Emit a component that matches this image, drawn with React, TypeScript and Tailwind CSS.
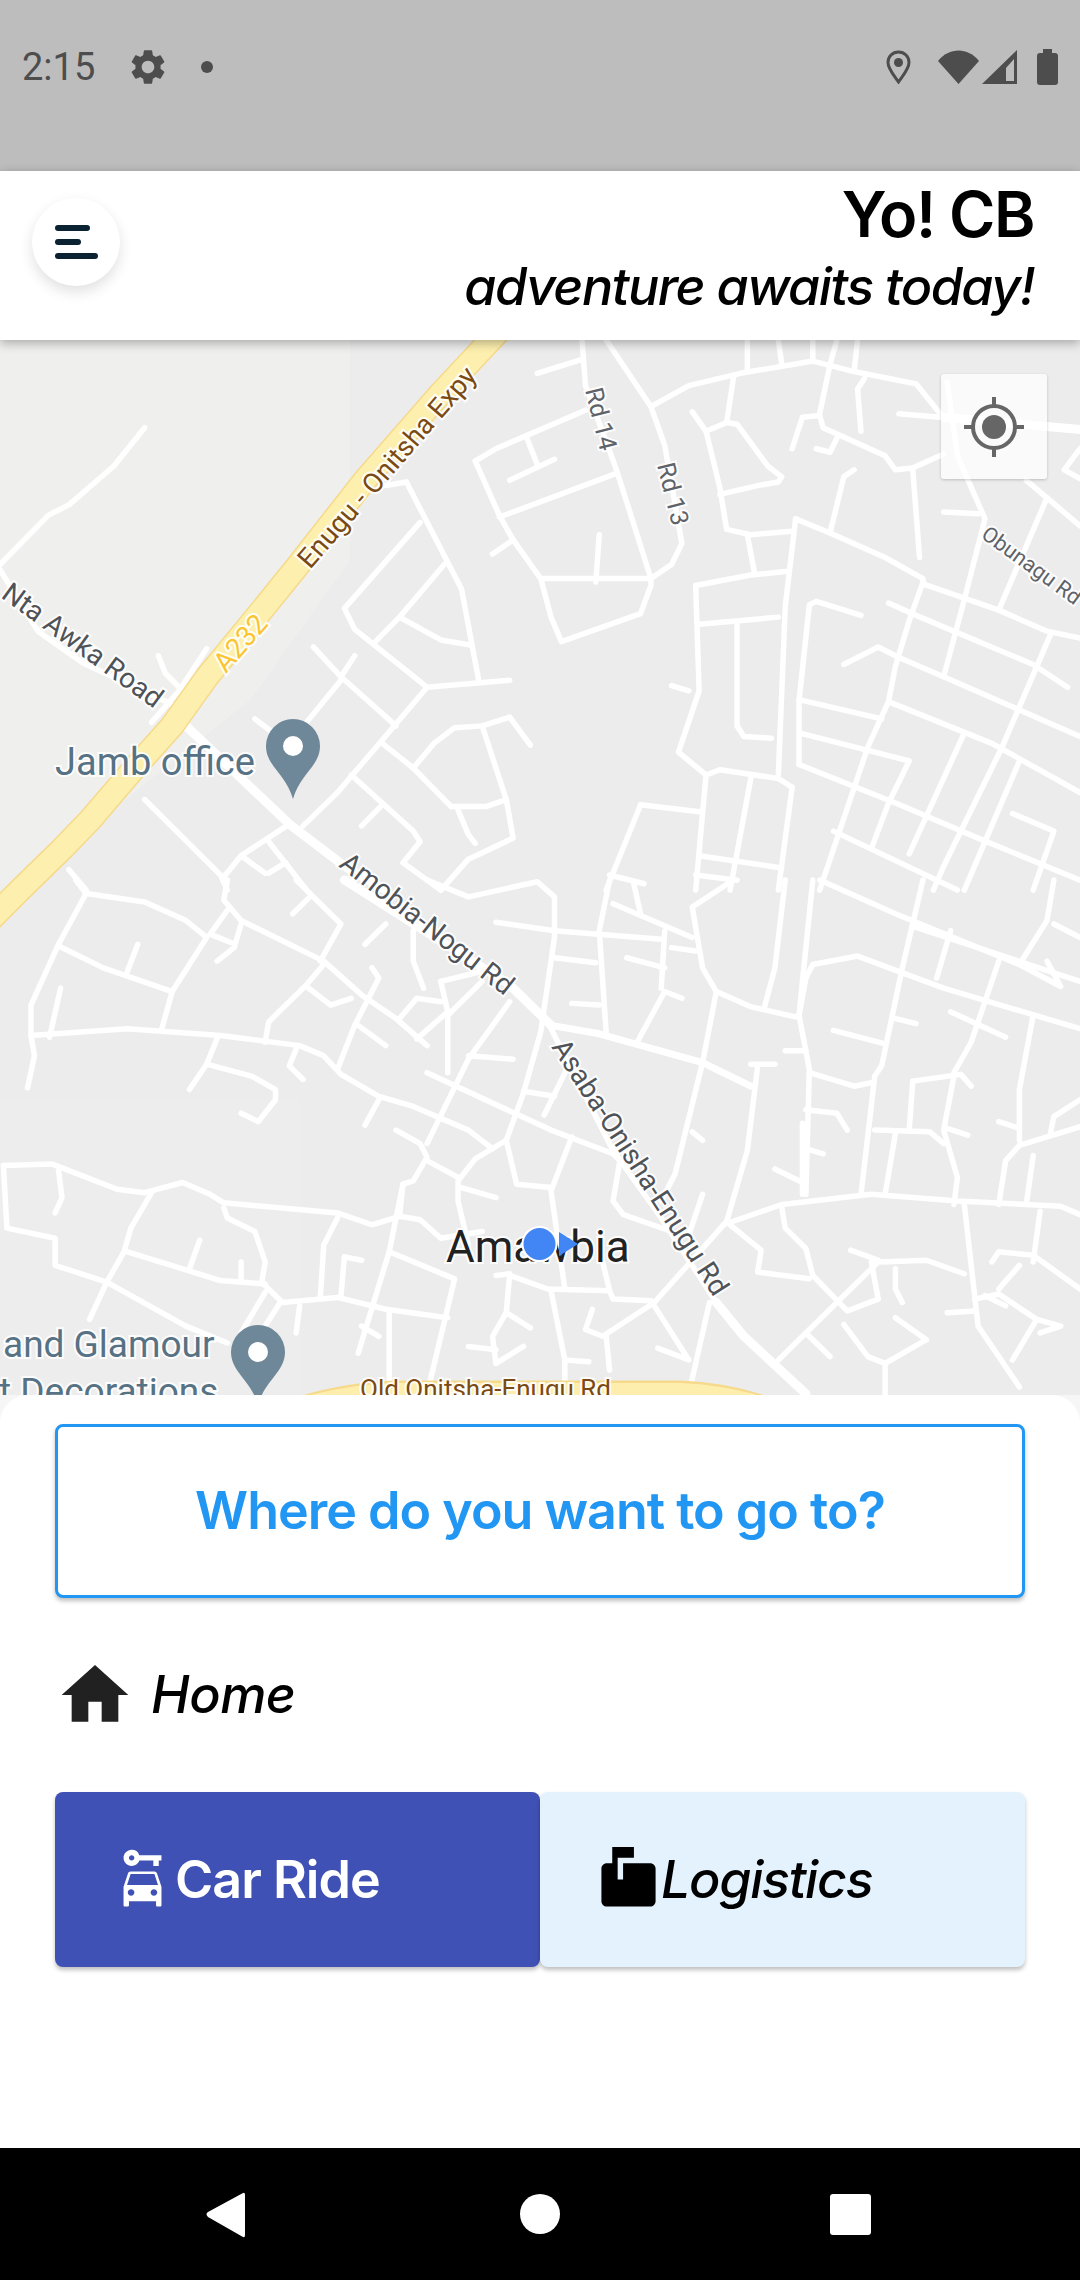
import React from "react";
import { MdCarRental, MdMarkunreadMailbox, MdHome, MdSettings } from "react-icons/md";

const upperRoads = [
  "M210,250 L165,360 L100,470 L70,500 L0,640",
  "M0,655 L55,830 L120,920 L240,1030 L270,1060",
  "M230,900 L240,950 L265,1000",
  "M300,880 L260,1000 L220,1090",
  "M590,405 L560,415",
  "M590,405 L670,710 L695,970",
  "M740,970 L620,990 L595,950 L515,825 L500,765 L610,520",
  "M645,640 L580,790 L545,860",
  "M580,790 L640,855 L685,870",
  "M455,875 L495,960 L515,900",
  "M495,960 L575,1100",
  "M620,990 L555,1140 L490,1290 L440,1385",
  "M495,970 L445,1090",
  "M370,1080 L430,1170",
  "M770,1155 L740,1075 L700,1100 L660,1105 L630,1150 L600,1220 L655,1330",
  "M555,1150 L600,1220",
  "M700,1100 L735,1310 L745,1420 L680,1480 L640,1568",
  "M655,1330 L705,1330 L735,1310",
  "M665,1340 L680,1410 L690,1435",
  "M510,1240 L600,1400 L610,1430 L585,1490 L640,1568",
  "M555,1325 L525,1385",
  "M210,1310 L320,1525 L330,1568",
  "M420,1380 L350,1470 L325,1530",
  "M390,1430 L445,1568",
  "M350,1470 L385,1520",
  "M415,1490 L390,1520",
  "M100,1510 L125,1568",
  "M690,345 L725,500 L745,570 L785,680 L800,790 L815,860 L930,780 L945,700 L945,680 L785,680",
  "M690,345 L720,310 L850,200",
  "M765,280 L780,355",
  "M740,400 L805,340",
  "M725,505 L895,380",
  "M715,610 L745,570",
  "M870,555 L865,690",
  "M880,0 L945,190 L965,300 L990,580 L975,640 L945,680",
  "M845,0 L850,130 L895,370 L945,680",
  "M780,95 L845,55",
  "M945,190 L1000,130 L1075,95 L1180,60 L1240,90 L1330,125 L1365,210",
  "M1085,0 L1085,90",
  "M1130,0 L1135,70",
  "M1180,0 L1180,60",
  "M1215,0 L1205,70 L1190,210",
  "M1245,0 L1240,90",
  "M1065,105 L1055,235 L1025,260 L1005,205",
  "M1025,260 L1045,420 L1055,540 L1090,555 L1150,545",
  "M1055,235 L1070,240 L1115,360 L1135,390 L1130,405 L1100,415 L1045,440",
  "M1255,110 L1245,140 L1250,260",
  "M1150,310 L1165,220 L1190,215 L1195,250 L1285,330 L1300,370 L1325,365 L1370,325",
  "M1305,210 L1365,220",
  "M1215,280 L1205,320 L1185,310",
  "M1240,370 L1225,390 L1205,550",
  "M1325,365 L1335,620",
  "M1370,490 L1420,495",
  "M1375,120 L1390,330 L1430,510 L1400,740 L1370,960",
  "M1085,555 L1095,660",
  "M1155,510 L1205,550 L1285,620 L1340,680 L1340,695 L1450,770 L1520,830 L1568,850",
  "M1155,510 L1140,760 L1130,1240",
  "M1010,700 L1090,670 L1140,660",
  "M1010,700 L1015,1000 L985,1175 L1025,1240 L1045,1225 L1130,1250 L1150,1275",
  "M1015,810 L1130,790",
  "M1070,810 L1070,1100 L1080,1130 L1120,1135",
  "M1250,785 L1185,745 L1175,755 L1160,1030 L1160,1210",
  "M1340,690 L1320,800 L1300,930 L1290,1030 L1260,1160 L1190,1568",
  "M1160,1025 L1280,1080",
  "M1160,1120 L1260,1170 L1320,1200 L1290,1320 L1265,1450",
  "M1290,750 L1330,785 L1500,925 L1550,990",
  "M1225,925 L1275,875 L1305,905 L1370,960 L1568,1130",
  "M1295,1035 L1440,1150 L1568,1290",
  "M1160,1210 L1300,1320 L1420,1420 L1568,1540",
  "M1520,450 L1450,770",
  "M1525,840 L1490,1000 L1455,1160 L1370,1500 L1355,1568",
  "M1400,1120 L1320,1465",
  "M1480,1200 L1400,1568",
  "M1568,310 L1545,370 L1568,395",
  "M1490,400 L1520,450 L1568,530",
  "M1470,1350 L1530,1400 L1500,1568",
  "M1210,1400 L1390,1568",
  "M930,1325 L1015,1345",
  "M930,1325 L880,1568",
  "M1025,1240 L1010,1568",
  "M1090,1250 L1060,1568",
  "M1150,1275 L1130,1568",
  "M1015,1470 L1135,1505",
  "M885,1525 L935,1550",
  "M1010,1525 L1070,1540",
  "M1000,1000 L975,985",
];

const upperThick = ["M270,1100 L420,1380 L500,1500 L560,1568", "M1370,220 L1568,255"];

const lowerRoads = [
  "M125,40 L210,65 L270,120 L300,170 L250,330 L235,440",
  "M110,0 L125,40 L85,190 L45,370 L45,460 L50,520 L40,615",
  "M85,195 L150,260 L250,330",
  "M200,190 L185,270",
  "M88,320 L72,465",
  "M45,460 L185,440 L320,460 L435,490 L470,520 L495,575 L550,640 L600,670 L680,740 L715,795",
  "M330,0 L325,60 L350,120 L470,240 L525,340 L575,410 L620,490",
  "M330,90 L305,160 L335,185",
  "M350,130 L340,200 L315,240",
  "M430,0 L495,130 L465,240",
  "M450,50 L425,100",
  "M470,250 L445,310 L390,420 L385,480",
  "M445,315 L480,370 L510,350",
  "M540,260 L550,290 L515,430 L490,560",
  "M520,430 L560,490",
  "M315,470 L300,545 L275,620",
  "M300,545 L365,580 L400,620 L400,650 L375,715 L350,690",
  "M430,500 L420,550 L440,590",
  "M530,190 L560,130",
  "M600,150 L600,240 L615,320",
  "M580,410 L605,350 L640,360",
  "M640,300 L700,270",
  "M640,300 L650,390 L605,470",
  "M700,300 L650,400 L650,570",
  "M740,360 L680,530 L620,780",
  "M680,520 L745,530",
  "M620,0 L680,50 L780,5 L805,50 L805,170 L785,450 L760,630 L735,770 L750,900 L800,910",
  "M760,625 L805,640",
  "M830,530 L790,695",
  "M830,760 L800,920 L820,1210",
  "M720,125 L805,150 L960,175",
  "M805,230 L865,245",
  "M830,365 L870,370",
  "M885,0 L870,150 L880,450",
  "M890,70 L1005,170",
  "M925,480 L965,330 L990,350",
  "M910,230 L965,260",
  "M975,200 L1010,210",
  "M965,150 L960,320",
  "M920,10 L930,100",
  "M1065,0 L1005,80 L1020,260 L1040,330 L1020,540 L980,870 L960,950",
  "M1040,330 L1090,375 L1155,405",
  "M1140,0 L1125,260 L1110,375",
  "M1180,0 L1160,400 L1175,560 L1170,930",
  "M1190,0 L1300,100 L1480,250 L1540,315 L1520,240",
  "M1160,400 L1170,290 L1180,250 L1245,225 L1370,320 L1568,440",
  "M1340,0 L1310,260 L1280,550 L1270,580 L1250,930",
  "M1330,140 L1568,300",
  "M1530,0 L1520,120 L1480,250",
  "M1530,130 L1568,170",
  "M1380,150 L1360,290",
  "M1450,240 L1410,480 L1385,570",
  "M1500,400 L1480,620 L1480,770",
  "M1210,445 L1285,485",
  "M1300,410 L1330,425",
  "M1380,390 L1460,465",
  "M1140,505 L1170,505",
  "M1175,570 L1240,610 L1265,600",
  "M1325,600 L1320,740",
  "M1325,595 L1395,575 L1410,610",
  "M1385,580 L1370,740 L1390,880 L1385,960",
  "M1270,740 L1350,745 L1370,780",
  "M1375,735 L1405,755",
  "M1450,715 L1480,735",
  "M1300,750 L1285,930",
  "M1170,680 L1215,690 L1230,740",
  "M1170,795 L1195,810",
  "M1125,855 L1165,895",
  "M1165,720 L1165,930",
  "M1005,745 L1020,770",
  "M1090,545 L1125,545",
  "M1100,550 L1085,800 L1055,1010",
  "M1020,930 L1000,1050",
  "M1568,730 L1480,785 L1460,830 L1450,960",
  "M1500,815 L1490,960",
  "M1568,650 L1530,700 L1525,750",
  "M1050,1020 L1135,960 L1265,930 L1390,950 L1540,965 L1568,990",
  "M1400,960 L1420,1320 L1480,1500",
  "M1135,970 L1140,1030 L1170,1090 L1180,1170 L1230,1275 L1275,1240 L1265,1130",
  "M1060,1020 L1105,1095 L1100,1160 L1175,1180",
  "M1055,1010 L950,1250 L875,1350 L850,1330 L860,1270",
  "M1275,1130 L1130,1420",
  "M1280,1130 L1345,1125 L1400,1165",
  "M1300,1150 L1300,1210 L1310,1250",
  "M1235,1095 L1275,1125",
  "M1170,1340 L1205,1410",
  "M1225,1315 L1260,1410 L1285,1430 L1345,1360 L1300,1295",
  "M1285,1430 L1285,1520",
  "M1375,1280 L1415,1275",
  "M1415,1240 L1450,1225 L1505,1300 L1470,1420",
  "M1440,1130 L1450,1100 L1500,1110 L1568,1210",
  "M1450,1210 L1480,1140",
  "M1505,1300 L1540,1320 L1510,1340",
  "M1510,980 L1500,1130",
  "M1430,1230 L1460,1260",
  "M5,845 L75,840 L170,915 L210,925 L265,895 L305,930 L325,955 L490,985 L540,1020 L580,995 L610,1005 L640,1060 L700,1040",
  "M5,845 L10,1030 L80,1060 L80,1140 L155,1190 L270,1320 L330,1370",
  "M85,860 L90,940 L80,985",
  "M220,925 L190,1030 L180,1100 L155,1190 L130,1300",
  "M325,970 L330,1000 L370,1040 L385,1130 L380,1190 L410,1250 L490,1235 L560,1270 L650,1295",
  "M185,1100 L320,1185 L385,1195",
  "M290,1065 L275,1150",
  "M350,1130 L350,1190",
  "M385,1220 L350,1340",
  "M405,1255 L385,1320",
  "M435,1260 L430,1340",
  "M490,1000 L470,1080 L465,1235",
  "M500,1115 L525,1125",
  "M500,1115 L495,1230",
  "M580,995 L585,900 L600,890 L620,820 L610,780 L575,740",
  "M620,830 L665,880",
  "M735,770 L690,825 L665,890 L665,950 L680,1080",
  "M670,910 L720,940",
  "M585,900 L565,1100 L520,1400",
  "M565,1100 L660,1180 L620,1520",
  "M550,650 L530,725",
  "M740,1170 L795,1210 L885,1215 L875,1130",
  "M720,1170 L740,1165 L735,1280 L715,1350 L720,1430",
  "M735,1280 L770,1325",
  "M680,1380 L720,1390",
  "M720,1430 L760,1380",
  "M800,1215 L820,1420 L820,1520",
  "M820,1420 L855,1425",
  "M885,1215 L890,1240 L945,1245",
  "M880,1350 L885,1450",
  "M950,1260 L1000,1420 L955,1385",
  "M565,1280 L565,1520",
  "M525,1320 L550,1350",
  "M1030,1250 L1000,1520",
  "M620,570 L800,740 L890,810 L900,830 L890,950 L905,990 L975,1040",
  "M800,440 L890,800 L960,1000 L1040,1250",
];

const lowerMedium = ["M800,430 L870,455 L1020,540 L1090,610"];
const lowerThick = ["M500,0 L740,310 L800,430", "M1040,1250 L1080,1350 L1170,1520"];

const road = {
  fill: "none",
  stroke: "#ffffff",
  strokeLinejoin: "round" as const,
  strokeLinecap: "round" as const,
  vectorEffect: "non-scaling-stroke" as const,
};

const highway = "M500,330 L441,393 L365,480 L296,568 L262,610 L207,677 L172,726 L138,764 L90,820 L62,849 L20,890 L-20,930";

function MapLabel({ x, y, size, angle = 0, color, children }: { x: number; y: number; size: number; angle?: number; color: string; children: React.ReactNode }) {
  return (
    <text
      x={x}
      y={y}
      fontSize={size}
      fontFamily="Roboto, sans-serif"
      fill={color}
      stroke="#ffffff"
      strokeOpacity={0.9}
      strokeWidth={4}
      paintOrder="stroke"
      transform={angle ? `rotate(${angle} ${x} ${y})` : undefined}
    >
      {children}
    </text>
  );
}

function Pin({ cx, top }: { cx: number; top: number }) {
  const cy = top + 27;
  return (
    <g>
      <path
        d={`M${cx - 27},${cy} a27,27 0 0 1 54,0 c0,20 -20,28 -27,53 c-7,-25 -27,-33 -27,-53 z`}
        fill="#6f8899"
      />
      <circle cx={cx} cy={cy} r={10} fill="#ffffff" />
    </g>
  );
}

function MapDrawing() {
  return (
    <svg viewBox="0 340 1080 1055" className="block w-full h-full">
      <rect x="0" y="340" width="1080" height="1055" fill="#ececec" />
      <path d="M0,340 H350 V560 L250,700 L0,900 Z" fill="#efefee" />
      <path d="M0,1100 H300 V1395 H0 Z" fill="#eeeded" />
      <g transform="translate(0 340) scale(0.6888 0.3508)">
        {upperRoads.map((d) => (
          <path key={d} d={d} {...road} strokeWidth={5.5} />
        ))}
        {upperThick.map((d) => (
          <path key={d} d={d} {...road} strokeWidth={9} />
        ))}
      </g>
      <g transform="translate(0 880) scale(0.6888 0.338)">
        {lowerRoads.map((d) => (
          <path key={d} d={d} {...road} strokeWidth={5.5} />
        ))}
        {lowerMedium.map((d) => (
          <path key={d} d={d} {...road} strokeWidth={7} />
        ))}
        {lowerThick.map((d) => (
          <path key={d} d={d} {...road} strokeWidth={9} />
        ))}
      </g>
      <path d={highway} fill="none" stroke="#f6d98a" strokeWidth={25} strokeLinejoin="round" />
      <path d={highway} fill="none" stroke="#fdf0ae" strokeWidth={22} strokeLinejoin="round" />
      <path d="M290,1412 Q350,1393 400,1393 H680 Q730,1395 775,1412" fill="none" stroke="#f6d98a" strokeWidth={25} />
      <path d="M290,1412 Q350,1394 400,1394 H680 Q730,1396 775,1412" fill="none" stroke="#fdeeae" strokeWidth={22} />

      <MapLabel x={310} y={570} size={27.5} angle={-49} color="#7a4a12">Enugu - Onitsha Expy</MapLabel>
      <MapLabel x={226} y={674} size={28} angle={-49} color="#fbc531">A232</MapLabel>
      <MapLabel x={585} y={390} size={25} angle={76} color="#5f6368">Rd 14</MapLabel>
      <MapLabel x={657} y={465} size={25} angle={76} color="#5f6368">Rd 13</MapLabel>
      <MapLabel x={980} y={537} size={21.5} angle={36} color="#5f6368">Obunagu Rd</MapLabel>
      <MapLabel x={0} y={597} size={28} angle={36} color="#4f5358">Nta Awka Road</MapLabel>
      <MapLabel x={338} y={866} size={28} angle={38} color="#4f5358">Amobia-Nogu Rd</MapLabel>
      <MapLabel x={551} y={1047} size={28} angle={57} color="#4f5358">Asaba-Onisha-Enugu Rd</MapLabel>
      <MapLabel x={360} y={1398} size={26} color="#7a4a12">Old Onitsha-Enugu Rd</MapLabel>

      <Pin cx={293} top={719} />
      <Pin cx={258} top={1325} />
      <MapLabel x={55} y={775} size={38} color="#567284">Jamb office</MapLabel>
      <MapLabel x={3} y={1357} size={37} color="#567284">and Glamour</MapLabel>
      <MapLabel x={-1} y={1404} size={37} color="#567284">t Decorations</MapLabel>
      <MapLabel x={446} y={1262} size={44} color="#212121">Amawbia</MapLabel>

      <path d="M559,1232 L578,1244 L559,1256 Z" fill="#4285f4" />
      <circle cx={539.5} cy={1244} r={17} fill="#4285f4" stroke="#ffffff" strokeWidth={2} />
    </svg>
  );
}

export default function App() {
  return (
    <div className="w-[1080px] h-[2280px] flex flex-col overflow-hidden bg-white font-['Inter',sans-serif]">
      <div className="h-[171px] shrink-0 bg-[#bdbdbd] text-[#4d4d4d]">
        <div className="h-[134px] flex items-center pl-[22px] pr-[22px]">
          <span className="text-[38px] leading-none font-['Roboto',sans-serif]">2:15</span>
          <MdSettings size={42} className="ml-[32px]" />
          <span className="ml-[32px] w-[12px] h-[12px] rounded-full bg-[#4d4d4d]" />
          <div className="ml-auto flex items-center">
            <svg width="25" height="34" viewBox="0 0 25 34" className="mr-[27px]">
              <path d="M12.5,2 C6.5,2 2,6.6 2,12.5 C2,19 8.5,26 12.5,32 C16.5,26 23,19 23,12.5 C23,6.6 18.5,2 12.5,2 Z" fill="none" stroke="#4d4d4d" strokeWidth="3" />
              <circle cx="12.5" cy="12.5" r="4.5" fill="#4d4d4d" />
            </svg>
            <svg width="41" height="34" viewBox="0 0 41 34" className="mr-[3px]">
              <path d="M0,11 C11,-3 30,-3 41,11 L20.5,34 Z" fill="#4d4d4d" />
            </svg>
            <svg width="35" height="34" viewBox="0 0 35 34" className="mr-[20px]">
              <path fillRule="evenodd" d="M35,0 V34 H0 Z M32,9 L24,18 V31 H32 Z" fill="#4d4d4d" />
            </svg>
            <svg width="21" height="36" viewBox="0 0 21 36">
              <path d="M6,0 H15 V4 H18 Q21,4 21,7 V33 Q21,36 18,36 H3 Q0,36 0,33 V7 Q0,4 3,4 H6 Z" fill="#4d4d4d" />
            </svg>
          </div>
        </div>
      </div>

      <header className="relative z-10 h-[169px] shrink-0 bg-white flex items-start justify-between pl-[32px] pr-[46px] shadow-[0_3px_10px_rgba(0,0,0,0.3)]">
        <div className="mt-[27px] w-[88px] h-[88px] rounded-full bg-white flex flex-col justify-center gap-[8px] pl-[23px] shadow-[0_6px_14px_rgba(0,0,0,0.12)]">
          <span className="block w-[35px] h-[6px] rounded-full bg-[#0b2233]" />
          <span className="block w-[26px] h-[6px] rounded-full bg-[#0b2233]" />
          <span className="block w-[43px] h-[6px] rounded-full bg-[#0b2233]" />
        </div>
        <div className="flex flex-col items-end text-black">
          <div className="mt-[7px] text-[63px] leading-[72px] font-semibold tracking-[-1.5px]">Yo! CB</div>
          <div className="mt-[7px] text-[52px] leading-[60px] italic font-medium tracking-[-1.5px]">adventure awaits today!</div>
        </div>
      </header>

      <main className="relative h-[1055px] shrink-0 overflow-hidden">
        <MapDrawing />
        <button className="absolute left-[941px] top-[34px] w-[106px] h-[105px] rounded-[3px] bg-[rgba(255,255,255,0.72)] shadow-[0_1px_3px_rgba(0,0,0,0.2)] flex items-center justify-center">
          <svg width="60" height="60" viewBox="0 0 60 60" fill="none">
            <circle cx="30" cy="30" r="21" stroke="#666666" strokeWidth="4" />
            <circle cx="30" cy="30" r="12" fill="#666666" />
            <path d="M30,0 V9 M30,51 V60 M0,30 H9 M51,30 H60" stroke="#666666" strokeWidth="4" />
          </svg>
        </button>
      </main>

      <div className="h-[753px] shrink-0 bg-[#f6f6f6]">
        <section className="h-full bg-white rounded-t-[28px] px-[55px] pt-[29px]">
          <button className="w-full h-[174px] rounded-[8px] border-[3px] border-[#2196f3] bg-white shadow-[0_3px_4px_rgba(0,0,0,0.25)] text-[#2196f3] text-[52px] font-semibold tracking-[-1px]">
            Where do you want to go to?
          </button>
          <div className="mt-[57px] flex items-center h-[80px]">
            <MdHome size={80} className="text-[#212121]" />
            <span className="ml-[16px] text-[52px] italic font-medium tracking-[-0.5px] text-black">Home</span>
          </div>
          <div className="mt-[57px] flex">
            <button className="w-[485px] h-[175px] rounded-[8px] bg-[#3f51b5] text-white flex items-center pl-[55px] shadow-[0_3px_4px_rgba(0,0,0,0.25)]">
              <MdCarRental size={65} />
              <span className="text-[52px] font-semibold tracking-[-1px]">Car Ride</span>
            </button>
            <button className="w-[485px] h-[175px] rounded-[8px] bg-[#e3f2fd] text-black flex items-center pl-[56px] shadow-[0_3px_4px_rgba(0,0,0,0.25)]">
              <MdMarkunreadMailbox size={65} />
              <span className="text-[52px] italic font-medium tracking-[-1.3px]">Logistics</span>
            </button>
          </div>
        </section>
      </div>

      <nav className="relative z-10 h-[132px] shrink-0 bg-black flex items-center">
        <svg width="1080" height="132" viewBox="0 0 1080 132" className="block">
          <path d="M243,45 Q245,44 245,47 V87 Q245,90 243,89 L208,69 Q205,66 208,64 Z" fill="#ffffff" />
          <circle cx="540" cy="66" r="20" fill="#ffffff" />
          <rect x="830" y="46" width="41" height="41" rx="3" fill="#ffffff" />
        </svg>
      </nav>
    </div>
  );
}
